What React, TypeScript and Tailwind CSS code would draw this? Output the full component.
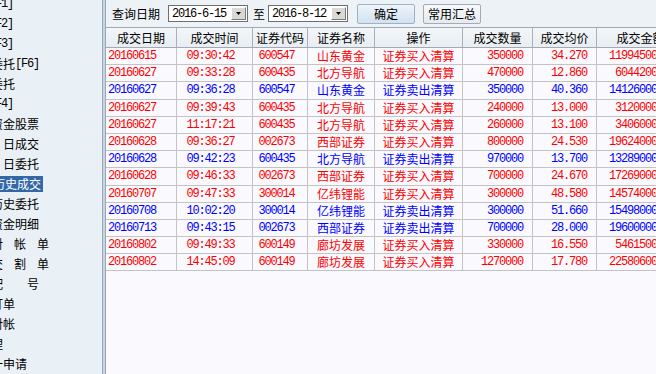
const cjk = "font-['Noto_Sans_CJK_SC',sans-serif]";
const mono = "font-['Liberation_Mono',monospace] text-[12px] tracking-[-1.2px]";

type Row = [string, string, string, string, string, string, string, string, 'r' | 'b'];

const rows: Row[] = [
  ['20160615', '09:30:42', '600547', '山东黄金', '证券买入清算', '350000', '34.270', '11994500.00', 'r'],
  ['20160627', '09:33:28', '600435', '北方导航', '证券买入清算', '470000', '12.860', '6044200.00', 'r'],
  ['20160627', '09:36:28', '600547', '山东黄金', '证券卖出清算', '350000', '40.360', '14126000.00', 'b'],
  ['20160627', '09:39:43', '600435', '北方导航', '证券买入清算', '240000', '13.000', '3120000.00', 'r'],
  ['20160627', '11:17:21', '600435', '北方导航', '证券买入清算', '260000', '13.100', '3406000.00', 'r'],
  ['20160628', '09:36:27', '002673', '西部证券', '证券买入清算', '800000', '24.530', '19624000.00', 'r'],
  ['20160628', '09:42:23', '600435', '北方导航', '证券卖出清算', '970000', '13.700', '13289000.00', 'b'],
  ['20160628', '09:46:33', '002673', '西部证券', '证券买入清算', '700000', '24.670', '17269000.00', 'r'],
  ['20160707', '09:47:33', '300014', '亿纬锂能', '证券买入清算', '300000', '48.580', '14574000.00', 'r'],
  ['20160708', '10:02:20', '300014', '亿纬锂能', '证券卖出清算', '300000', '51.660', '15498000.00', 'b'],
  ['20160713', '09:43:15', '002673', '西部证券', '证券卖出清算', '700000', '28.000', '19600000.00', 'b'],
  ['20160802', '09:49:33', '600149', '廊坊发展', '证券买入清算', '330000', '16.550', '5461500.00', 'r'],
  ['20160802', '14:45:09', '600149', '廊坊发展', '证券买入清算', '1270000', '17.780', '22580600.00', 'r'],
];

const headers = ['成交日期', '成交时间', '证券代码', '证券名称', '操作', '成交数量', '成交均价', '成交金额'];

const grid = 'grid grid-cols-[71px_76px_55px_67px_88px_70px_64px_88px]';

const Key = ({ k }: { k: string }) => <span className={mono}>{k}</span>;

const DateBox = ({ value }: { value: string }) => (
  <div className="flex items-center w-[80px] h-[17px] bg-white border border-[#6f6f6f] pl-[3px] pr-[1px]">
    <span className={`${mono} flex-1 text-black`}>{value}</span>
    <div className="w-[15px] h-[13px] bg-[#d8d8d4] border border-t-white border-l-white border-b-[#7a7a7a] border-r-[#7a7a7a] flex items-center justify-center">
      <svg width="5" height="3" viewBox="0 0 5 3">
        <path d="M0 0h5L2.5 3z" fill="#000" />
      </svg>
    </div>
  </div>
);

export default function App() {
  return (
    <div className={`flex w-[656px] h-[374px] overflow-hidden text-[12px] leading-none text-black ${cjk}`}>
      <aside className="w-[102px] shrink-0 bg-[#eaf1f6] overflow-hidden">
        <div className="mt-[-6px] flex flex-col whitespace-nowrap">
          <div className="h-[20px] flex items-center ml-[-35px]">买入<Key k="[F1]" /></div>
          <div className="h-[20px] flex items-center ml-[-35px]">卖出<Key k="[F2]" /></div>
          <div className="h-[20px] flex items-center ml-[-35px]">撤单<Key k="[F3]" /></div>
          <div className="h-[20px] flex items-center ml-[-9px]">委托<Key k="[F6]" /></div>
          <div className="h-[20px] flex items-center ml-[-9px]">委托</div>
          <div className="h-[20px] flex items-center ml-[-35px]">查询<Key k="[F4]" /></div>
          <div className="h-[20px] flex items-center ml-[-9px]">资金股票</div>
          <div className="h-[20px] flex items-center ml-[3px]">日成交</div>
          <div className="h-[20px] flex items-center ml-[3px]">日委托</div>
          <div className="h-[20px] flex items-center">
            <span className="ml-[-9px] h-[16px] px-[2px] flex items-center bg-[#3467a8] text-white">历史成交</span>
          </div>
          <div className="h-[20px] flex items-center ml-[-9px]">历史委托</div>
          <div className="h-[20px] flex items-center ml-[-9px]">资金明细</div>
          <div className="h-[20px] flex items-center ml-[-9px] tracking-[11px]">对帐单</div>
          <div className="h-[20px] flex items-center ml-[-9px] tracking-[11px]">交割单</div>
          <div className="h-[20px] flex items-center ml-[-9px]">配　　号</div>
          <div className="h-[20px] flex items-center ml-[-9px]">打单</div>
          <div className="h-[20px] flex items-center ml-[-9px]">对帐</div>
          <div className="h-[20px] flex items-center ml-[-9px]">理</div>
          <div className="h-[20px] flex items-center ml-[-21px]">统一申请</div>
        </div>
      </aside>

      <div className="w-[4px] shrink-0 bg-[#c5d5e5] border-x border-[#9ba7b3]" />

      <main className="flex-1 min-w-0 flex flex-col bg-[#f9f9fe] overflow-hidden">
        <div className="h-[27px] shrink-0 flex items-center bg-[#edf2f6] pl-[6px]">
          <span>查询日期</span>
          <div className="ml-[8px]"><DateBox value="2016-6-15" /></div>
          <span className="ml-[5px]">至</span>
          <div className="ml-[3px]"><DateBox value="2016-8-12" /></div>
          <button className="ml-[9px] w-[58px] h-[20px] flex items-center justify-center border border-[#9fb1c4] rounded-[2px] bg-gradient-to-b from-[#eef4fa] to-[#d3e1ef]">
            确定
          </button>
          <button className="ml-[8px] w-[58px] h-[20px] flex items-center justify-center border border-[#a4abb3] rounded-[2px] bg-gradient-to-b from-[#f7f9fb] to-[#e6ebf0]">
            常用汇总
          </button>
        </div>

        <div className="w-[579px] shrink-0">
          <div className={`${grid} h-[21px] border-y border-[#a3a9b0] bg-gradient-to-b from-[#f4f7f9] to-[#e7edf2]`}>
            {headers.map((h) => (
              <div key={h} className="flex items-center justify-center border-r border-[#a9b0b7]">
                {h}
              </div>
            ))}
          </div>

          {rows.map((r, i) => {
            const color = r[8] === 'r' ? 'text-[#ff0000]' : 'text-[#0000ff]';
            const cell = 'h-[17.2px] flex items-center border-r border-b border-[#c3c3c3]';
            return (
              <div key={i} className={`${grid} ${color}`}>
                <div className={`${cell} pl-[2px]`}><span className={mono}>{r[0]}</span></div>
                <div className={`${cell} justify-center pr-[8px]`}><span className={mono}>{r[1]}</span></div>
                <div className={`${cell} justify-center pr-[7px]`}><span className={mono}>{r[2]}</span></div>
                <div className={`${cell} justify-center`}>{r[3]}</div>
                <div className={`${cell} justify-center`}>{r[4]}</div>
                <div className={`${cell} justify-end pr-[9px]`}><span className={mono}>{r[5]}</span></div>
                <div className={`${cell} justify-end pr-[9px]`}><span className={mono}>{r[6]}</span></div>
                <div className={`${cell} justify-end pr-[9px]`}><span className={mono}>{r[7]}</span></div>
              </div>
            );
          })}
        </div>
      </main>
    </div>
  );
}
